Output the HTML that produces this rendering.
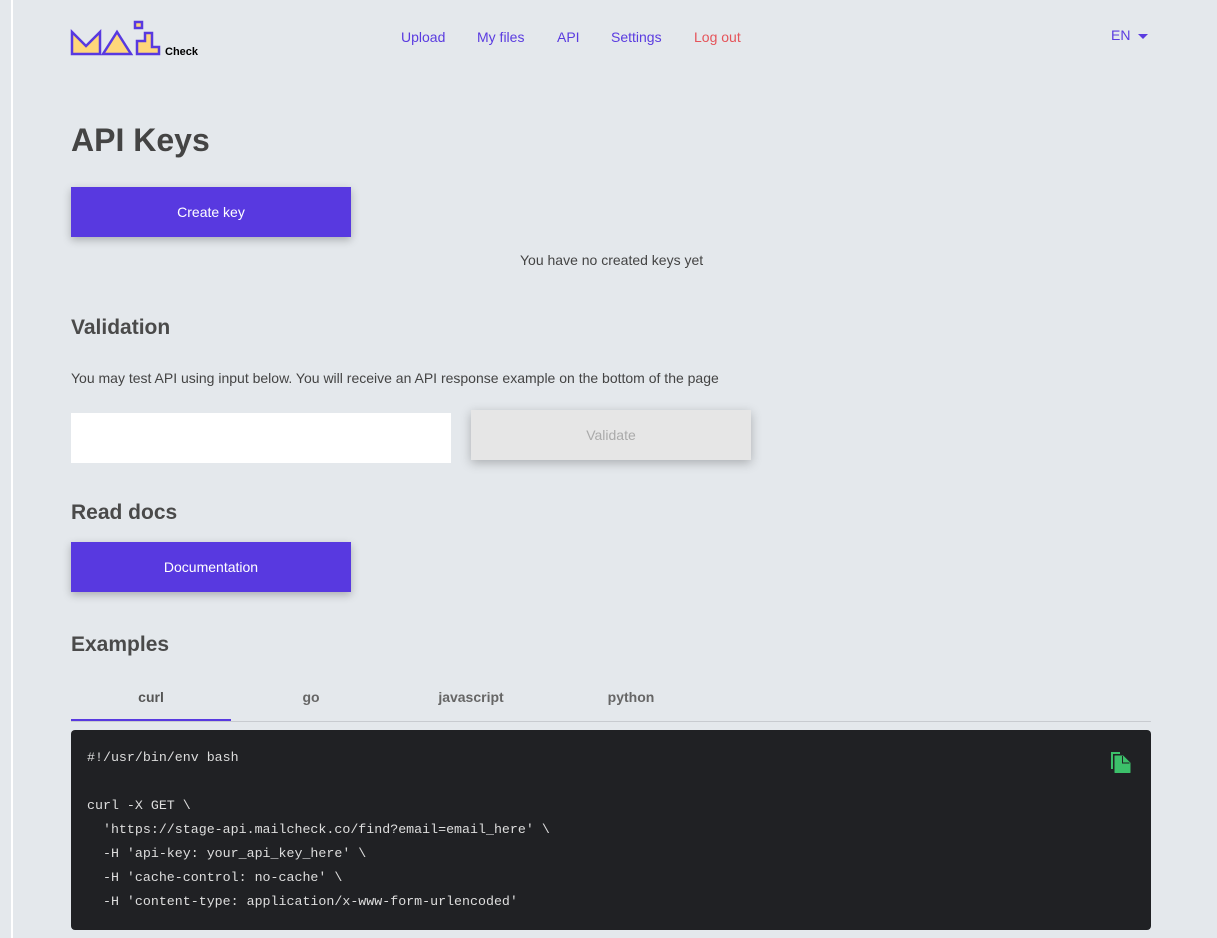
<!DOCTYPE html>
<html><head><style>
body{margin:0;width:1217px;height:938px;overflow:hidden;background:#e4e8ec;font-family:"Liberation Sans",sans-serif;position:relative}
.vl{position:absolute;left:11px;top:0;width:2px;height:938px;background:#fff}
.a{position:absolute}
.nav a{position:absolute;top:29px;font-size:14px;color:#5a3be0;text-decoration:none}
h1{position:absolute;left:71px;top:122px;margin:0;font-size:32px;color:#444;font-weight:bold}
h2{position:absolute;left:71px;margin:0;font-size:21px;color:#4a4a4a;font-weight:bold}
.btn{position:absolute;left:71px;width:280px;height:50px;background:#5839e0;color:#fff;font-size:14px;text-align:center;line-height:50px;box-shadow:0 3px 8px rgba(0,0,0,.25)}
.t{position:absolute;font-size:14px;color:#444}
.tab{position:absolute;top:689px;width:160px;text-align:center;font-size:14px;font-weight:bold;color:#666}
pre{position:absolute;left:71px;top:730px;width:1080px;height:200px;margin:0;background:#202124;border-radius:4px;color:#ddd;font-family:"Liberation Mono",monospace;font-size:13.3px;line-height:24px;box-sizing:border-box;padding:16px 16px}
</style></head><body>
<div class="vl"></div>
<svg class="a" style="left:70px;top:20px" width="135" height="40" viewBox="0 0 135 40">
<path d="M2 12 L16 26 L30 12 L30 34 L2 34 Z" fill="#ffd77a" stroke="#5839e0" stroke-width="2.5"/>
<path d="M33 34 L47 12 L61 34 Z" fill="#ffd77a" stroke="#5839e0" stroke-width="2.5"/>
<path d="M67 34 L67 21 L75 21 L75 13 L82 13 L82 27 L89 27 L89 34 Z" fill="#ffd77a" stroke="#5839e0" stroke-width="2.5"/>
<rect x="65" y="2" width="7" height="6" fill="#ffd77a" stroke="#5839e0" stroke-width="2.5"/>
<text x="95" y="35" font-size="11" font-weight="bold" fill="#000" font-family="Liberation Sans">Check</text>
</svg>
<div class="nav"><a style="left:401px">Upload</a><a style="left:477px">My files</a><a style="left:557px">API</a><a style="left:611px">Settings</a><a style="left:694px;color:#e5545a">Log out</a></div>
<div class="a" style="left:1111px;top:27px;font-size:14px;color:#5a3be0">EN <span style="display:inline-block;margin-left:4px;border-left:5px solid transparent;border-right:5px solid transparent;border-top:5px solid #5a3be0;vertical-align:middle"></span></div>
<h1>API Keys</h1>
<div class="btn" style="top:187px">Create key</div>
<div class="t" style="left:520px;top:252px">You have no created keys yet</div>
<h2 style="top:316px">Validation</h2>
<div class="t" style="left:71px;top:370px">You may test API using input below. You will receive an API response example on the bottom of the page</div>
<div class="a" style="left:71px;top:413px;width:380px;height:50px;background:#fff"></div>
<div class="a" style="left:471px;top:410px;width:280px;height:50px;background:#e6e6e6;color:#aaa;font-size:14px;text-align:center;line-height:50px;box-shadow:0 3px 10px rgba(0,0,0,.25)">Validate</div>
<h2 style="top:501px">Read docs</h2>
<div class="btn" style="top:542px">Documentation</div>
<h2 style="top:633px">Examples</h2>
<div class="tab" style="left:71px;color:#555">curl</div><div class="tab" style="left:231px">go</div><div class="tab" style="left:391px">javascript</div><div class="tab" style="left:551px">python</div>
<div class="a" style="left:71px;top:721px;width:1080px;height:1px;background:#c8cbd0"></div>
<div class="a" style="left:71px;top:719px;width:160px;height:2px;background:#5839e0"></div>
<pre>#!/usr/bin/env bash

curl -X GET \
  'https://stage-api.mailcheck.co/find?email=email_here' \
  -H 'api-key: your_api_key_here' \
  -H 'cache-control: no-cache' \
  -H 'content-type: application/x-www-form-urlencoded'</pre>
<svg class="a" style="left:1110px;top:751px" width="22" height="22" viewBox="0 0 22 22"><path d="M1 1h9v2H3v15H1z" fill="#3cc06a"/><path d="M5 5h8l7 7v9.5H5z" fill="#3cc06a" stroke="#3cc06a" stroke-linejoin="round"/><path d="M12.5 5v7h7" fill="none" stroke="#202124" stroke-width="1"/></svg>
</body></html>
